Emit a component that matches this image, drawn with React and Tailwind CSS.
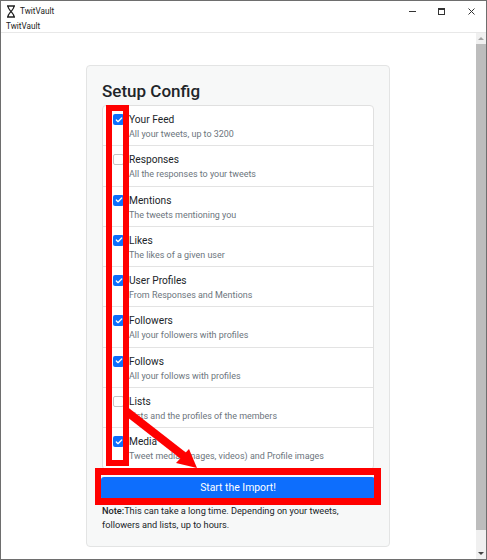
import React from "react";
import { Check } from "lucide-react";

const font = "font-['Roboto','Noto_Sans',sans-serif]";

const items = [
  { title: "Your Feed", sub: "All your tweets, up to 3200", on: true },
  { title: "Responses", sub: "All the responses to your tweets", on: false },
  { title: "Mentions", sub: "The tweets mentioning you", on: true },
  { title: "Likes", sub: "The likes of a given user", on: true },
  { title: "User Profiles", sub: "From Responses and Mentions", on: true },
  { title: "Followers", sub: "All your followers with profiles", on: true },
  { title: "Follows", sub: "All your follows with profiles", on: true },
  { title: "Lists", sub: "Lists and the profiles of the members", on: false },
  { title: "Media", sub: "Tweet media (images, videos) and Profile images", on: true },
];

function Row({ item, last }) {
  return (
    <div className={`h-[40.3px] flex pl-[10px] pt-[7px] ${last ? "" : "border-b border-[#e3e3e3]"}`}>
      <div className="w-[11px] h-[11px] mt-[1px] mr-[5px] shrink-0">
        {item.on ? (
          <div className="w-[11px] h-[11px] rounded-[2px] bg-[#0d6efd] flex items-center justify-center">
            <Check size={8} strokeWidth={4} className="text-white" />
          </div>
        ) : (
          <div className="w-[11px] h-[11px] rounded-[2px] bg-white border border-[#c4c4c4]" />
        )}
      </div>
      <div className="min-w-0">
        <div className="text-[10.200px] leading-[13px] text-[#212529] whitespace-nowrap">{item.title}</div>
        <div className="text-[8.950px] leading-[14px] mt-[1px] text-[#6c757d] whitespace-nowrap">{item.sub}</div>
      </div>
    </div>
  );
}

function TitleBar() {
  return (
    <div className="h-[20px] flex items-center bg-white">
      <svg width="10" height="13" viewBox="0 0 10 13" className="ml-[5px] mr-[4px]">
        <path d="M1 1h8M1 12h8M2 1c0 3 2 4 3 5.500c1 -1.500 3 -2.500 3 -5.500M2 12c0 -3 2 -4 3 -5.500c1 1.500 3 2.500 3 5.500" fill="none" stroke="#222" strokeWidth="1.300" />
      </svg>
      <span className="text-[8.200px] leading-none text-[#222]">TwitVault</span>
      <div className="ml-auto flex items-center pr-[11px]">
        <div className="w-[7px] h-[1px] bg-[#333]" />
        <div className="ml-[22px] w-[7px] h-[7px] border border-[#333] border-t-2" />
        <svg width="7" height="7" viewBox="0 0 7 7" className="ml-[23px]">
          <path d="M.5 .5l6 6M6.500 .5l-6 6" stroke="#333" strokeWidth="1" />
        </svg>
      </div>
    </div>
  );
}

function Scrollbar() {
  return (
    <div className="w-[10px] shrink-0 bg-[#f0f0f0] flex flex-col items-center">
      <div className="h-[11px] flex items-center justify-center">
        <div className="w-0 h-0 border-x-[3px] border-x-transparent border-b-[3px] border-b-[#a3a3a3]" />
      </div>
      <div className="w-full h-[486px] bg-[#bdbdbd]" />
      <div className="mt-auto h-[12px] flex items-center justify-center">
        <div className="w-0 h-0 border-x-[3px] border-x-transparent border-t-[3px] border-t-[#444]" />
      </div>
    </div>
  );
}

export default function App() {
  return (
    <div className={`relative w-[487px] h-[560px] overflow-hidden bg-white border border-[#6e6e6e] flex flex-col ${font}`}>
      <TitleBar />
      <div className="h-[12px] pl-[5px] text-[8.200px] leading-[11px] text-[#222] border-b border-[#e8e8e8]">TwitVault</div>

      <div className="flex-1 flex min-h-0 bg-white">
        <div className="flex-1 pl-[85px] pt-[32px]">
          <div className="w-[304px] h-[482px] bg-[#f7f8f8] border border-[#e3e4e4] rounded-[4px] pl-[15px] pr-[15px] pt-[13px]">
            <h1 className="text-[17px] leading-[24px] font-medium text-[#212529]">Setup Config</h1>
            <div className="mt-[2px] w-[272px] bg-white border border-[#e0e0e0] rounded-[4px]">
              {items.map((item, i) => (
                <Row key={item.title} item={item} last={i === items.length - 1} />
              ))}
            </div>
            <button className="mt-[7px] -ml-[1px] w-[274px] h-[23px] bg-[#0d6efd] rounded-[3px] text-white text-[10.400px]">
              Start the Import!
            </button>
            <p className="mt-[4px] text-[9.200px] leading-[14px] text-[#212529]">
              <b className="font-medium">Note:</b>This can take a long time. Depending on your tweets, followers and lists, up to hours.
            </p>
          </div>
        </div>
        <Scrollbar />
      </div>

      {/* red annotations painted on the screenshot */}
      <div className="absolute left-[105px] top-[104px] w-[23px] h-[361px] border-[6px] border-[#ff0000]" />
      <div className="absolute left-[94px] top-[467px] w-[286px] h-[37px] border-y-[7px] border-l-[6px] border-r-[7px] border-[#ff0000]" />
      <svg className="absolute left-0 top-0" width="487" height="560" viewBox="0 0 487 560">
        <path d="M125 410L184 456" stroke="#ff0000" strokeWidth="8" fill="none" />
        <path d="M196 467L175 462L188 448Z" fill="#ff0000" />
      </svg>
    </div>
  );
}
